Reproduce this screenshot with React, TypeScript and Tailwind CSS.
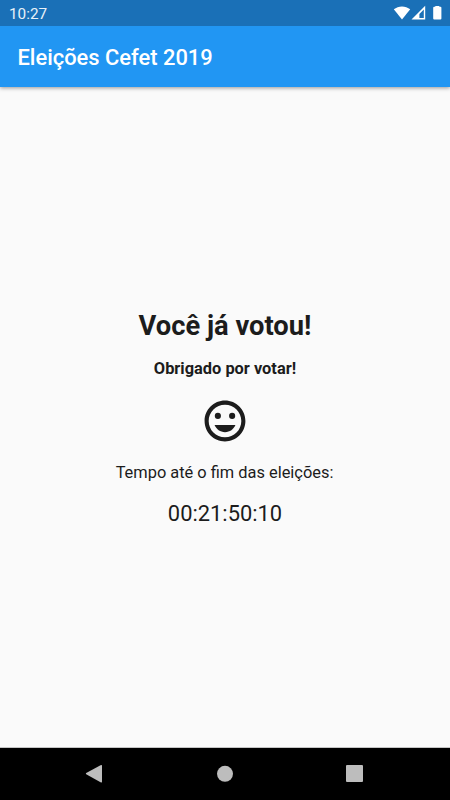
import { useState } from 'react';

// Formats seconds as days:hours:minutes:seconds
const formatRemaining = (total: number) => {
  const parts = [
    Math.floor(total / 86400),
    Math.floor(total / 3600) % 24,
    Math.floor(total / 60) % 60,
    total % 60,
  ];
  return parts.map((part) => part.toString().padStart(2, '0')).join(':');
};

function StatusBar() {
  return (
    <div className="z-20 flex h-[26px] shrink-0 items-center justify-between bg-[#1a70b7] pl-[9px] text-[#e8f1f8]">
      <span className="pt-[3px] text-[15.3px] leading-none">10:27</span>
      <svg className="h-[26px] w-[60px]" viewBox="390 0 60 26">
        <path fill="#fff" d="M393.8 9.3C398.4 5.4 405.6 5.4 410.2 9.3L402 19.5Z" />
        <path fill="#fff" fillRule="evenodd" d="M425.2 5.8V19.5H411.5ZM423.8 9.6L419.4 14V18.1H423.8Z" />
        <path fill="#fff" d="M435.3 6.8V6h4v.8h1.1q1 0 1 1V18.5q0 1-1 1h-6.2q-1 0-1-1V7.8q0-1 1-1Z" />
      </svg>
    </div>
  );
}

function AppBar({ title }: { title: string }) {
  return (
    <header className="z-10 flex h-[61px] shrink-0 items-center bg-[#2196f3] px-[17.5px] shadow-[0_1px_4px_rgba(0,0,0,0.4)]">
      <h1 className="pt-[3px] text-[21.9px] font-medium text-white">{title}</h1>
    </header>
  );
}

function SmileIcon() {
  return (
    <svg className="size-[50px]" viewBox="-.25 -.25 24.5 24.5" fill="currentColor">
      <path d="M11.99 2C6.47 2 2 6.48 2 12s4.47 10 9.99 10C17.52 22 22 17.52 22 12S17.52 2 11.99 2zM12 20c-4.42 0-8-3.58-8-8s3.58-8 8-8 8 3.58 8 8-3.58 8-8 8z" />
      <circle cx="15.5" cy="9.5" r="1.5" />
      <circle cx="8.5" cy="9.5" r="1.5" />
      <path d="M12 17.5c2.33 0 4.31-1.46 5.11-3.5H6.89c.8 2.04 2.78 3.5 5.11 3.5z" />
    </svg>
  );
}

function NavigationBar() {
  return (
    <nav className="h-[52px] shrink-0 bg-black">
      <svg className="h-[52px] w-full" viewBox="0 748 450 52" fill="#bdbdbd">
        <path d="M86.2 773.1L101 765q1-.4 1 .7v16q0 1.1-1 .7L86.2 774.3q-.8-.6 0-1.2Z" />
        <circle cx="225" cy="773.8" r="8" />
        <rect x="346" y="765" width="17" height="17" rx="1" />
      </svg>
    </nav>
  );
}

export default function App() {
  const [remaining] = useState(78610);

  return (
    <div className="flex h-[800px] w-[450px] flex-col overflow-hidden bg-[#fafafa] font-['Roboto',sans-serif] text-[#1c1c1c]">
      <StatusBar />
      <AppBar title="Eleições Cefet 2019" />
      <main className="flex flex-1 flex-col items-center border-b border-[#c4c4c4] pt-[223px]">
        <h2 className="text-[27.3px] leading-8 font-bold">Você já votou!</h2>
        <p className="mt-[17px] text-[16.4px] leading-5 font-bold">Obrigado por votar!</p>
        <div className="mt-[17px]">
          <SmileIcon />
        </div>
        <p className="mt-[17px] pr-px text-[16.4px] leading-5">Tempo até o fim das eleições:</p>
        <p className="mt-[18px] text-[21.9px] leading-[26px]">{formatRemaining(remaining)}</p>
      </main>
      <NavigationBar />
    </div>
  );
}
